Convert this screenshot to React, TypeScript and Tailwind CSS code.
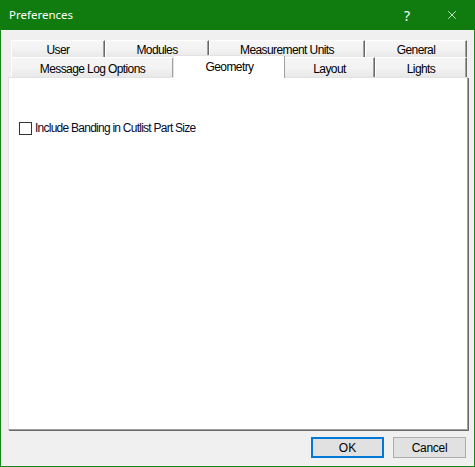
import { X } from 'lucide-react';

type TabProps = { label: string; width: number; selected?: boolean };

const ui = { fontFamily: '"Liberation Sans", Arial, sans-serif' };

function Tab({ label, width, selected }: TabProps) {
	if (selected) {
		return (
			<div
				className="relative z-10 -mt-[2px] -mb-[1px] -mx-[1px] flex items-center justify-center border-l border-t border-l-[#e3e3e3] border-t-[#e3e3e3] bg-white pb-[1px] text-[12px] tracking-[-0.6px] text-black shadow-[inset_-1px_0_0_#a0a0a0]"
				style={{ width: width + 2 }}
			>
				{label}
			</div>
		);
	}
	return (
		<div
			className="flex h-full items-center justify-center border-l border-t border-l-white border-t-white border-r border-r-[#696969] bg-gradient-to-b from-[#f6f6f6] via-[#f3f3f3] to-[#e8e8e8] pt-[2px] text-[12px] tracking-[-0.6px] text-black shadow-[inset_-1px_0_0_#a0a0a0]"
			style={{ width }}
		>
			{label}
		</div>
	);
}

export default function App() {
	return (
		<div
			className="flex h-[467px] w-[475px] flex-col border-x border-b border-[#1b851b] bg-[#f0f0f0]"
			style={ui}
		>
			<div className="-mx-[1px] flex h-[30px] items-center bg-[#107c10] pl-[9px] text-white">
				<span className="text-[11.5px]" style={{ fontFamily: '"Noto Sans", "Open Sans", sans-serif' }}>
					Preferences
				</span>
				<span
					className="ml-auto mr-[35px] text-[14px]"
					style={{ fontFamily: '"Noto Sans", "Open Sans", sans-serif' }}
				>
					?
				</span>
				<X className="mr-[16px] h-[14px] w-[14px]" strokeWidth={1.3} />
			</div>

			<div className="flex flex-1 flex-col px-[7px] pt-[10px]">
				<div className="ml-[3px] flex h-[17px]">
					<Tab label="User" width={94} />
					<Tab label="Modules" width={104} />
					<Tab label="Measurement Units" width={156} />
					<Tab label="General" width={102} />
				</div>
				<div className="ml-[3px] flex h-[20px]">
					<Tab label="Message Log Options" width={163} />
					<Tab label="Geometry" width={110} selected />
					<Tab label="Layout" width={91} />
					<Tab label="Lights" width={92} />
				</div>

				<div className="h-[353px] w-[460px] border-l border-t border-[#e3e3e3] border-r-[#a0a0a0] border-b-[#a0a0a0] border-r border-b bg-white shadow-[1px_1px_0_#696969]">
					<label className="ml-[10px] mt-[41px] flex items-center gap-[3px] text-[12px] tracking-[-0.75px] text-[#0a0a2a]">
						<span className="h-[13px] w-[13px] border border-[#333333] bg-white" />
						Include Banding in Cutlist Part Size
					</label>
				</div>

				<div className="mt-[7px] flex justify-end gap-[9px] pr-[1px]">
					<button className="h-[21px] w-[73px] border-2 border-[#0078d7] bg-[#e1e1e1] text-[12px] text-black">
						OK
					</button>
					<button className="h-[21px] w-[73px] border border-[#adadad] bg-[#e1e1e1] text-[12px] tracking-[-0.3px] text-black">
						Cancel
					</button>
				</div>
			</div>
		</div>
	);
}
